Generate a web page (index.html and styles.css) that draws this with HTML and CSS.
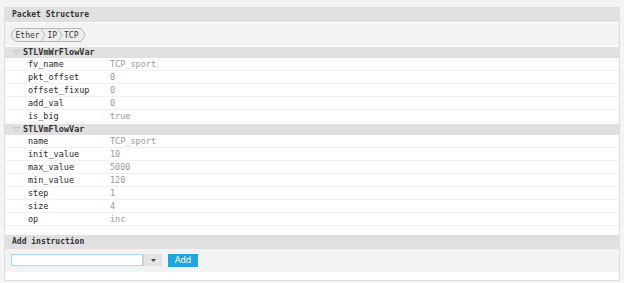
FILE: index.html
```html
<!DOCTYPE html>
<html lang="en">
<head>
    <meta charset="UTF-8">
    <title>Packet Structure</title>
    <link rel="stylesheet" href="styles.css">
</head>
<body>
    <div class="panel">
        <div class="band panel-head">Packet Structure</div>
        <div class="crumb-bar">
            <svg class="crumbs" width="76" height="14" viewBox="0 0 76 14">
                <path d="M7,0.5 H70 L74.5,7 L70,13.5 H7 A6.5,6.5 0 0 1 7,0.5 Z" fill="#ededed" stroke="#b8b8b8"/>
                <polyline points="30,0.5 34,7 30,13.5" fill="none" stroke="#b8b8b8"/>
                <polyline points="47,0.5 51,7 47,13.5" fill="none" stroke="#b8b8b8"/>
                <text x="4.5" y="10">Ether</text>
                <text x="36.5" y="10">IP</text>
                <text x="53" y="10">TCP</text>
            </svg>
        </div>

        <div class="band tree-head">
            <svg class="caret" width="7" height="5" viewBox="0 0 7 5"><polyline points="0.5,0.5 3.5,4.5 6.5,0.5 0.5,0.5" fill="none" stroke="#c4c4c4"/></svg>
            STLVmWrFlowVar
        </div>
        <div class="row"><span class="key">fv_name</span><span class="val">TCP_sport</span></div>
        <div class="row"><span class="key">pkt_offset</span><span class="val">0</span></div>
        <div class="row"><span class="key">offset_fixup</span><span class="val">0</span></div>
        <div class="row"><span class="key">add_val</span><span class="val">0</span></div>
        <div class="row"><span class="key">is_big</span><span class="val">true</span></div>

        <div class="band tree-head">
            <svg class="caret" width="7" height="5" viewBox="0 0 7 5"><polyline points="0.5,0.5 3.5,4.5 6.5,0.5 0.5,0.5" fill="none" stroke="#c4c4c4"/></svg>
            STLVmFlowVar
        </div>
        <div class="row"><span class="key">name</span><span class="val">TCP_sport</span></div>
        <div class="row"><span class="key">init_value</span><span class="val">10</span></div>
        <div class="row"><span class="key">max_value</span><span class="val">5000</span></div>
        <div class="row"><span class="key">min_value</span><span class="val">120</span></div>
        <div class="row"><span class="key">step</span><span class="val">1</span></div>
        <div class="row"><span class="key">size</span><span class="val">4</span></div>
        <div class="row"><span class="key">op</span><span class="val">inc</span></div>

        <div class="band add-head">Add instruction</div>
        <div class="add-bar">
            <div class="combo">
                <div class="combo-input"></div>
                <div class="combo-btn"><svg width="5" height="3" viewBox="0 0 5 3"><polygon points="0,0 5,0 2.5,3" fill="#444"/></svg></div>
            </div>
            <button class="add-btn">Add</button>
        </div>
    </div>
</body>
</html>
```

FILE: styles.css
```css
body {
    margin: 0;
    padding: 7px 4px 2px 4px;
    background: #f4f4f4;
    font-family: "DejaVu Sans Mono", monospace;
    font-size: 8.5px;
    color: #333;
}
.panel {
    width: 614px;
    background: white;
    border: 1px solid #dedede;
    padding-bottom: 8px;
}
.band {
    background: #e0e0e0;
    font-weight: bold;
    color: #333;
}
.panel-head {
    height: 14px;
    line-height: 14px;
    padding-left: 7px;
    font-size: 8px;
}
.crumb-bar {
    background: #f3f3f3;
    margin-top: 1px;
    height: 23px;
    padding: 5px 0 0 6px;
    box-sizing: border-box;
}
.crumbs {
    display: block;
}
.crumbs text {
    font-family: "DejaVu Sans Mono", monospace;
    font-size: 8px;
    fill: #3a3a3a;
}
.tree-head {
    margin-top: 1px;
    height: 11px;
    line-height: 11px;
    padding-left: 8px;
    display: flex;
    align-items: center;
    gap: 3px;
}
.caret {
    display: block;
}
.row {
    display: flex;
    height: 13px;
    line-height: 12px;
    border-bottom: 1px solid #f2f2f2;
    box-sizing: border-box;
}
.key {
    width: 82px;
    padding-left: 23px;
    color: #2a2a2a;
}
.val {
    color: #9a9a9a;
}
.add-head {
    margin-top: 9px;
    height: 14px;
    line-height: 14px;
    padding-left: 7px;
    font-size: 8px;
}
.add-bar {
    background: #f3f3f3;
    height: 23px;
    display: flex;
    align-items: flex-start;
    gap: 6px;
    padding: 5px 0 0 6px;
    box-sizing: border-box;
}
.combo {
    display: flex;
    height: 12px;
}
.combo-input {
    width: 130px;
    height: 10px;
    border: 1px solid #a9d9f0;
    background: white;
    box-shadow: inset 0 0 1px #cdeaf7;
}
.combo-btn {
    width: 19px;
    height: 12px;
    background: #e4e4e4;
    border-left: 1px solid #d0d0d0;
    display: flex;
    align-items: center;
    justify-content: center;
    box-sizing: border-box;
}
.combo-btn svg {
    display: block;
}
.add-btn {
    width: 30px;
    height: 13px;
    padding: 0;
    border: none;
    background: #1ea6e2;
    color: white;
    font-family: "DejaVu Sans", sans-serif;
    font-size: 8.5px;
    line-height: 13px;
}
```
